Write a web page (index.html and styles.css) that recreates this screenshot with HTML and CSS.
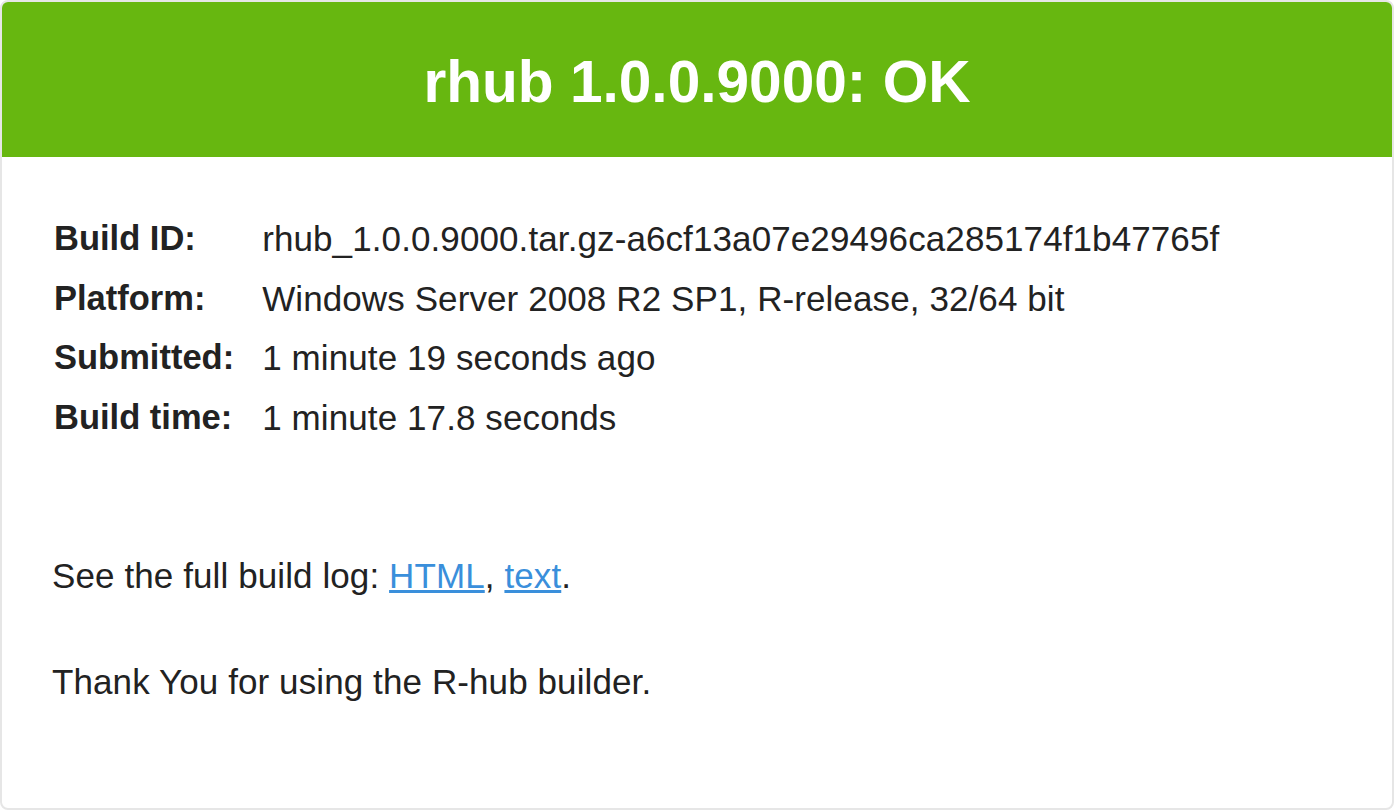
FILE: index.html
```html
<!DOCTYPE html>
<html lang="en">
<head>
<meta charset="utf-8">
<title>rhub 1.0.0.9000: OK</title>
<link rel="stylesheet" href="styles.css">
</head>
<body>
<div class="card">
  <header class="card-header">
    <h1 class="title">rhub 1.0.0.9000: OK</h1>
  </header>
  <main class="card-body">
    <dl class="details">
      <dt>Build ID:</dt>
      <dd>rhub_1.0.0.9000.tar.gz-a6cf13a07e29496ca285174f1b47765f</dd>
      <dt>Platform:</dt>
      <dd>Windows Server 2008 R2 SP1, R-release, 32/64 bit</dd>
      <dt>Submitted:</dt>
      <dd>1 minute 19 seconds ago</dd>
      <dt>Build time:</dt>
      <dd>1 minute 17.8 seconds</dd>
    </dl>
    <p class="log">See the full build log: <a href="#">HTML</a>, <a href="#">text</a>.</p>
    <p class="thanks">Thank You for using the R-hub builder.</p>
  </main>
</div>
</body>
</html>
```

FILE: styles.css
```css
html, body {
  margin: 0;
  padding: 0;
  background: #ffffff;
}

body {
  font-family: "Liberation Sans", Arial, Helvetica, sans-serif;
  color: #222222;
}

.card {
  border: 2px solid #e6e6e6;
  border-radius: 8px;
  overflow: hidden;
  background: #ffffff;
}

.card-header {
  background: #67b710;
  padding: 46px 0 42px;
}

.title {
  margin: 0;
  color: #ffffff;
  font-size: 58.6px;
  line-height: 67px;
  font-weight: bold;
  text-align: center;
}

.card-body {
  padding: 52px 50px 106px;
  font-size: 35px;
  letter-spacing: 0.1px;
}

.details {
  display: grid;
  grid-template-columns: auto 1fr;
  column-gap: 28px;
  margin: 0;
  padding-left: 2px;
  line-height: 59.5px;
}

.details dt {
  font-weight: bold;
  font-size: 34.5px;
  letter-spacing: 0;
}

.details dd {
  margin: 0;
  white-space: nowrap;
}

.log,
.thanks {
  margin: 0;
  line-height: 40px;
}

.log {
  margin-top: 109px;
}

.thanks {
  margin-top: 66px;
}

.log a {
  color: #3a8fdb;
  text-decoration: underline;
}
```
